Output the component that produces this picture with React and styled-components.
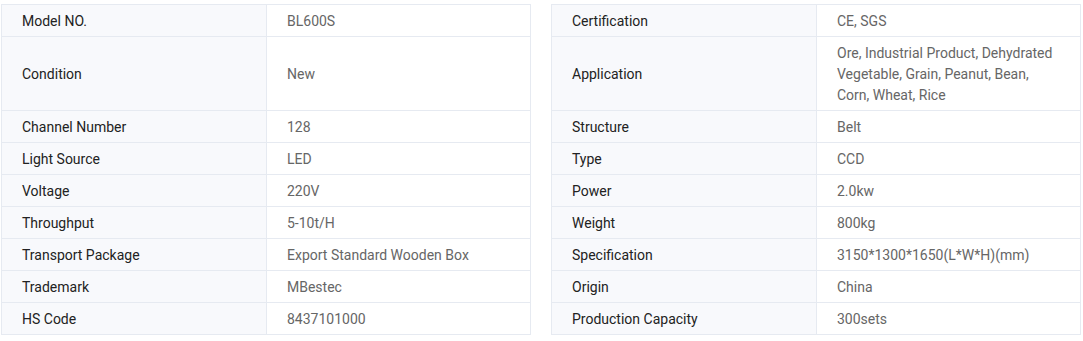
import React from "react";
import styled, { createGlobalStyle } from "styled-components";

const GlobalStyle = createGlobalStyle`
  body {
    margin: 0;
    background: #ffffff;
    font-family: Roboto, "Liberation Sans", Arial, sans-serif;
  }
`;

const Wrapper = styled.div`
  display: flex;
  gap: 20px;
  padding: 4px 2px 0 1px;
`;

const Table = styled.div`
  display: grid;
  grid-template-columns: 265px 264px;
  border-top: 1px solid #e6eaf1;
  border-left: 1px solid #e6eaf1;
  font-size: 14px;
  line-height: 21px;
`;

const Cell = styled.div`
  display: flex;
  align-items: center;
  min-height: ${({ $tall }) => ($tall ? "63px" : "21px")};
  padding: 6px 20px 4px;
  border-right: 1px solid #e6eaf1;
  border-bottom: 1px solid #e6eaf1;
`;

const Label = styled(Cell)`
  background: #f8f9fc;
  color: #222222;
`;

const Value = styled(Cell)`
  background: #ffffff;
  color: #666666;
`;

const left = [
  ["Model NO.", "BL600S"],
  ["Condition", "New", true],
  ["Channel Number", "128"],
  ["Light Source", "LED"],
  ["Voltage", "220V"],
  ["Throughput", "5-10t/H"],
  ["Transport Package", "Export Standard Wooden Box"],
  ["Trademark", "MBestec"],
  ["HS Code", "8437101000"],
];

const right = [
  ["Certification", "CE, SGS"],
  ["Application", "Ore, Industrial Product, Dehydrated Vegetable, Grain, Peanut, Bean, Corn, Wheat, Rice", true],
  ["Structure", "Belt"],
  ["Type", "CCD"],
  ["Power", "2.0kw"],
  ["Weight", "800kg"],
  ["Specification", "3150*1300*1650(L*W*H)(mm)"],
  ["Origin", "China"],
  ["Production Capacity", "300sets"],
];

const SpecTable = ({ rows }) => (
  <Table>
    {rows.map(([k, v, tall]) => (
      <React.Fragment key={k}>
        <Label $tall={tall}>{k}</Label>
        <Value $tall={tall}>{v}</Value>
      </React.Fragment>
    ))}
  </Table>
);

export default function App() {
  return (
    <>
      <GlobalStyle />
      <Wrapper>
        <SpecTable rows={left} />
        <SpecTable rows={right} />
      </Wrapper>
    </>
  );
}
